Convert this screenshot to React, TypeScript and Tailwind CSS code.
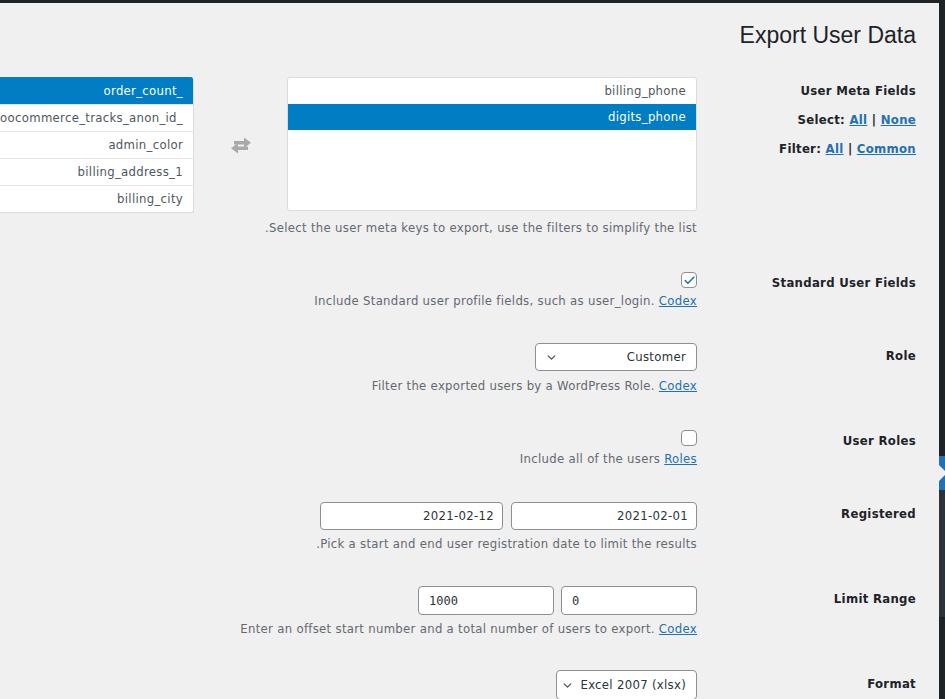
import { Check, ChevronDown } from "lucide-react";
import type { ReactNode } from "react";

const AVAILABLE = [
  "order_count_",
  "woocommerce_tracks_anon_id_",
  "admin_color",
  "billing_address_1",
  "billing_city",
];

const SELECTED = ["billing_phone", "digits_phone"];

function AdminMenu() {
  return (
    <div className="flex w-[6px] shrink-0 flex-col bg-[#1d2327]">
      <div className="h-[453px] shrink-0" />
      <div className="relative h-[34px] shrink-0 bg-[#2271b1]">
        {/* current-item arrow cut into the menu */}
        <svg className="absolute top-0 left-0" width="6" height="34" viewBox="0 0 6 34">
          <polygon points="0,9 8,17 0,25" fill="#f0f0f1" />
        </svg>
      </div>
      <div className="h-[127px] shrink-0 bg-[#2c3338]" />
    </div>
  );
}

function SwapIcon() {
  return (
    <svg width="22" height="17" viewBox="0 0 22 17" fill="#a7aaad">
      <rect x="4" y="4" width="11" height="3.5" />
      <polygon points="14,0.5 21,5.75 14,11" />
      <rect x="7" y="9.5" width="11" height="3.5" />
      <polygon points="8,6 1,11.25 8,16.5" />
    </svg>
  );
}

function Row({
  label,
  labelClass,
  rowClass,
  aside,
  children,
}: {
  label: string;
  labelClass: string;
  rowClass: string;
  aside?: ReactNode;
  children: ReactNode;
}) {
  return (
    <div className={`flex ${rowClass}`}>
      <div className="w-[219px] shrink-0">
        <div className={`text-[13px] leading-[20px] font-bold text-[#1d2327] ${labelClass}`}>{label}</div>
        {aside}
      </div>
      <div className="flex min-w-0 flex-1 flex-col items-start">{children}</div>
    </div>
  );
}

function Desc({ children, className }: { children: ReactNode; className: string }) {
  return <p className={`text-[13px] leading-[18px] whitespace-nowrap text-[#646970] ${className}`}>{children}</p>;
}

function A({ children }: { children: ReactNode }) {
  return <a className="text-[#2271b1] underline">{children}</a>;
}

function Checkbox({ checked }: { checked?: boolean }) {
  return (
    <div className="flex size-4 items-center justify-center rounded-[4px] border border-[#8c8f94] bg-white">
      {checked && <Check size={13} strokeWidth={3} className="text-[#2271b1]" />}
    </div>
  );
}

function Select({ value, className }: { value: string; className: string }) {
  return (
    <div className={`flex items-center rounded-[4px] border border-[#8c8f94] bg-white text-[13px] text-[#2c3338] ${className}`}>
      <span>{value}</span>
      <ChevronDown size={13} strokeWidth={2.5} className="mr-auto text-[#50575e]" />
    </div>
  );
}

function TextBox({ value, className }: { value: string; className: string }) {
  return (
    <div className={`flex items-center rounded-[4px] border border-[#8c8f94] bg-white text-[#2c3338] ${className}`}>
      {value}
    </div>
  );
}

export default function App() {
  return (
    <div
      dir="rtl"
      className="flex h-[699px] w-[945px] flex-col overflow-hidden bg-[#f0f0f1] font-['DejaVu_Sans_Condensed','DejaVu_Sans',sans-serif] tracking-[0.3px]"
    >
      <div className="h-[3px] shrink-0 bg-[#1d2327]" />
      <div className="flex min-h-0 flex-1">
        <AdminMenu />
        <main className="min-w-0 flex-1 overflow-hidden pr-[23px]">
          <h1 className="mt-[17px] mb-[11px] font-['Liberation_Sans',sans-serif] text-[23px] leading-[30px] tracking-normal text-[#1d2327]">
            Export User Data
          </h1>

          <Row
            label="User Meta Fields"
            labelClass="mt-[4px]"
            rowClass="pt-[16px] pb-[18px]"
            aside={
              <div className="text-[13px] leading-[20px] font-bold text-[#1d2327]">
                <div className="mt-[9px]">
                  Select: <A>All</A> | <A>None</A>
                </div>
                <div className="mt-[9px]">
                  Filter: <A>All</A> | <A>Common</A>
                </div>
              </div>
            }
          >
            <div className="flex shrink-0">
              <ul className="h-[134px] w-[410px] shrink-0 overflow-hidden rounded-[3px] border border-[#dcdcde] bg-white text-[13px]">
                {SELECTED.map((k, i) => (
                  <li
                    key={k}
                    dir="ltr"
                    className={
                      i === 1
                        ? "h-[26px] bg-[#007dc3] pr-[10px] text-right leading-[26px] text-white"
                        : "h-[26px] pr-[10px] text-right leading-[26px] text-[#50575e]"
                    }
                  >
                    {k}
                  </li>
                ))}
              </ul>
              <div className="flex w-[93px] shrink-0 items-center justify-center">
                <SwapIcon />
              </div>
              <ul className="w-[240px] shrink-0 overflow-hidden rounded-[3px] border-x border-b border-[#dcdcde] bg-white text-[13px]">
                {AVAILABLE.map((k, i) => (
                  <li
                    key={k}
                    dir="ltr"
                    className={
                      i === 0
                        ? "h-[27px] bg-[#007dc3] pr-[10px] text-right leading-[27px] whitespace-nowrap text-white"
                        : "h-[27px] border-t border-[#e6e6e8] pr-[10px] text-right leading-[26px] whitespace-nowrap text-[#50575e]"
                    }
                  >
                    {k}
                  </li>
                ))}
              </ul>
            </div>
            <Desc className="mt-[6px]">
              Select the user meta keys to export, use the filters to simplify the list.
            </Desc>
          </Row>

          <Row label="Standard User Fields" labelClass="mt-[1px]" rowClass="pt-[17px] pb-[17px]">
            <Checkbox checked />
            <Desc className="mt-[4px]">
              Include Standard user profile fields, such as user_login. <A>Codex</A>
            </Desc>
          </Row>

          <Row label="Role" labelClass="mt-[3px]" rowClass="pt-[16px] pb-[18px]">
            <Select value="Customer" className="h-[28px] w-[162px] pr-[10px] pl-[9px]" />
            <Desc className="mt-[6px]">
              Filter the exported users by a WordPress Role. <A>Codex</A>
            </Desc>
          </Row>

          <Row label="User Roles" labelClass="mt-[1px]" rowClass="pt-[17px] pb-[18px]">
            <Checkbox />
            <Desc className="mt-[4px]">
              Include all of the users <A>Roles</A>
            </Desc>
          </Row>

          <Row label="Registered" labelClass="mt-[2px]" rowClass="pt-[16px] pb-[18px]">
            <div className="flex gap-[8px]">
              <TextBox value="2021-02-01" className="h-[28px] w-[186px] pr-[8px] text-[13px]" />
              <TextBox value="2021-02-12" className="h-[28px] w-[183px] pr-[8px] text-[13px]" />
            </div>
            <Desc className="mt-[5px]">
              Pick a start and end user registration date to limit the results.
            </Desc>
          </Row>

          <Row label="Limit Range" labelClass="mt-[3px]" rowClass="pt-[15px] pb-[17px]">
            <div className="flex gap-[7px]">
              <TextBox
                value="0"
                className="h-[29px] w-[136px] justify-end pl-[10px] font-['DejaVu_Sans_Mono',monospace] text-[12px] tracking-normal"
              />
              <TextBox
                value="1000"
                className="h-[29px] w-[136px] justify-end pl-[10px] font-['DejaVu_Sans_Mono',monospace] text-[12px] tracking-normal"
              />
            </div>
            <Desc className="mt-[5px]">
              Enter an offset start number and a total number of users to export. <A>Codex</A>
            </Desc>
          </Row>

          <Row label="Format" labelClass="mt-[4px]" rowClass="pt-[15px]">
            <Select value="Excel 2007 (xlsx)" className="h-[30px] gap-[6px] pr-[10px] pl-[4px]" />
          </Row>
        </main>
      </div>
    </div>
  );
}
